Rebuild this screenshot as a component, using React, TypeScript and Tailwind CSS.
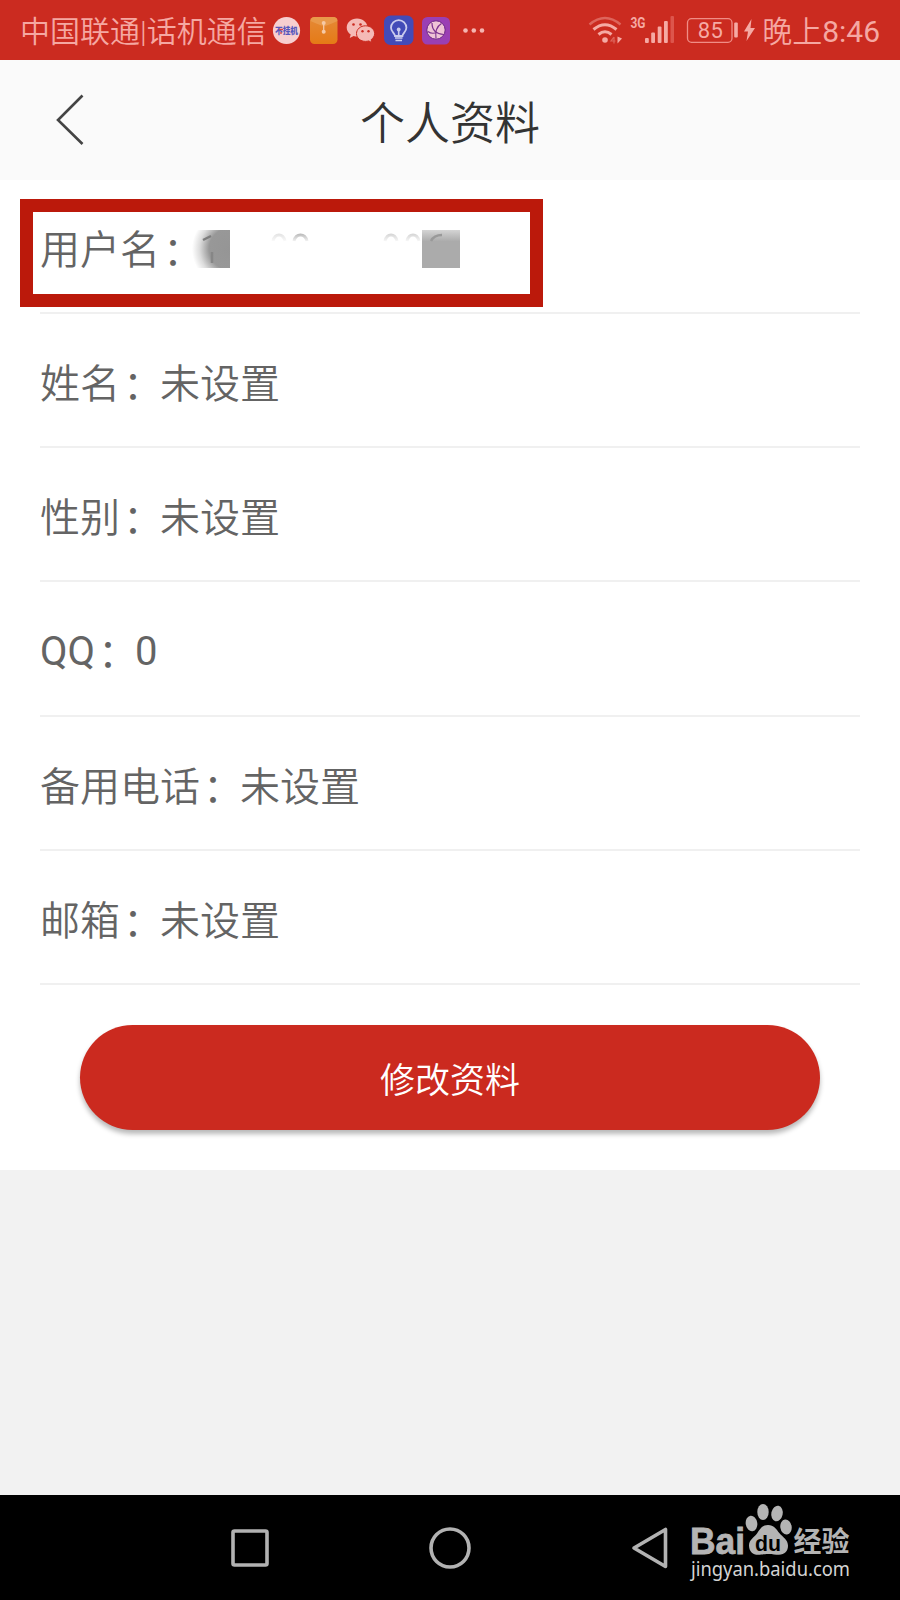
import React from 'react';

interface ProfileRowProps {
    label: string;
    value?: string;
    height: string;
    latin?: boolean;
    children?: React.ReactNode;
}

const CarrierIcons: React.FC = () => (
    <div className="flex items-center ml-[5px]">
        <svg width="30" height="60" viewBox="0 0 30 60">
            <circle cx="14.5" cy="30.5" r="13.6" fill="#f7cfd0" />
            <text x="3" y="34" fontSize="9" fontWeight="900" textLength="23" lengthAdjust="spacingAndGlyphs" fill="#5557bd" fontFamily="Noto Sans CJK SC">不挂机</text>
            <path d="M7 29.5h4M9 32v2" stroke="#d0474b" strokeWidth="1.3" />
        </svg>
        <svg className="ml-[6px]" width="30" height="60" viewBox="0 0 30 60">
            <defs>
                <linearGradient id="mail" x1="0" y1="0" x2="0" y2="1">
                    <stop offset="0" stopColor="#e58a37" />
                    <stop offset="1" stopColor="#e57a16" />
                </linearGradient>
            </defs>
            <rect x="2" y="17" width="27.5" height="27" rx="4.5" fill="url(#mail)" />
            <path d="M2.5 21q0-4 4.5-4h18q4.5 0 4.5 4q-11 5-13.5 5t-13.5-5z" fill="#e9994a" />
            <path d="M15.7 23.5v8" stroke="#f6c9a5" strokeWidth="1.3" />
            <circle cx="15.7" cy="23" r="2" fill="#f6c9a5" />
            <circle cx="15.7" cy="31.8" r="2" fill="#f6c9a5" />
        </svg>
        <svg className="ml-[6px]" width="34" height="60" viewBox="0 0 34 60">
            <path d="M13 18.5c-5.8 0-10.3 4-10.3 9 0 3 1.6 5.4 4 7l-1 3.6 4-2c1.2.4 2.2.5 3.6.5 5.7 0 10.2-4 10.2-9s-4.7-9.1-10.5-9.1z" fill="#f5bab6" />
            <path d="M21.5 25.8c-5 0-9 3.4-9 7.8s4 7.8 9 7.8c1.2 0 2.2-.2 3.2-.5l3.2 1.7-.8-2.9c2.1-1.4 3.5-3.6 3.5-6.1 0-4.4-4.1-7.8-9.1-7.8z" fill="#f5bab6" stroke="#cb2b20" strokeWidth="1" />
            <circle cx="9.5" cy="24.5" r="1.3" fill="#cb2b20" />
            <circle cx="16.5" cy="24.5" r="1.3" fill="#cb2b20" />
            <circle cx="18.5" cy="31.3" r="1.2" fill="#cb2b20" />
            <circle cx="24.5" cy="31.3" r="1.2" fill="#cb2b20" />
        </svg>
        <svg className="ml-[5px]" width="32" height="60" viewBox="0 0 32 60" fill="none">
            <rect x="1" y="15.5" width="29.5" height="29.5" rx="6.5" fill="#424bb8" />
            <path d="M12 36c0-2.5-4-4.200-4-8.200a7.700 7.700 0 0 1 15.400 0c0 4-4 5.700-4 8.200z" stroke="#c9cbed" strokeWidth="1.8" />
            <path d="M15.7 35.500V29.500M12 38h7.500M12.500 40.500h6.500" stroke="#c9cbed" strokeWidth="1.6" />
            <circle cx="15.7" cy="29.5" r="1.9" fill="#c9cbed" />
        </svg>
        <svg className="ml-[6px]" width="32" height="60" viewBox="0 0 32 60" fill="none">
            <rect x="1" y="17" width="28" height="27.5" rx="5.5" fill="#9a3fb4" />
            <circle cx="15" cy="30" r="9.2" fill="#efc3d6" stroke="#6c2785" strokeWidth="1" />
            <path d="M11 23c0 7 4 11 12 11.5M20.5 23.5c-5 3-6.5 8-5.5 15M7 31.5c3 2.5 6 2 9 1" stroke="#7d3290" strokeWidth="1.2" />
        </svg>
        <svg className="ml-[8px]" width="26" height="60" viewBox="0 0 26 60" fill="#f5b5b0">
            <circle cx="4.5" cy="30.5" r="2.3" />
            <circle cx="12.8" cy="30.5" r="2.3" />
            <circle cx="21" cy="30.5" r="2.3" />
        </svg>
    </div>
);

const SystemIcons: React.FC = () => (
    <div className="flex items-center">
        <svg width="40" height="60" viewBox="588 0 40 60" fill="none" stroke="#f5aaa4" strokeWidth="3">
            <path d="M589.5 24.5Q605 11.500 620.5 24.5" stroke="#dd655c" strokeWidth="2.4" />
            <path d="M593.5 29.5Q605 20 616.5 29.5" />
            <path d="M598.5 34.5Q605 29 611.5 34.5" />
            <circle cx="605" cy="40" r="2.8" fill="#f5aaa4" stroke="none" />
            <path d="M617.5 36.5v7l4.5-5z" fill="#f5aaa4" stroke="none" />
            <path d="M614 37v6.5M614 37l-3 4h4.5" stroke="#dd655c" strokeWidth="1.2" />
        </svg>
        <svg width="50" height="60" viewBox="628 0 50 60" fill="#f5aaa4">
            <text x="630.5" y="28" fontSize="15.5" fontWeight="700" textLength="15" lengthAdjust="spacingAndGlyphs" fontFamily="Roboto">3G</text>
            <rect x="645" y="38" width="3.8" height="5" rx="1" />
            <rect x="651.2" y="32.5" width="3.8" height="10.5" rx="1" />
            <rect x="657.7" y="26.5" width="3.8" height="16.5" rx="1" />
            <rect x="664" y="21" width="3.8" height="22" rx="1" />
            <rect x="670.5" y="16" width="3.5" height="27" rx="1" fill="#dd554c" />
        </svg>
        <svg className="ml-[7px]" width="74" height="60" viewBox="685 0 74 60">
            <rect x="687.5" y="18.7" width="44.5" height="23.6" rx="4" fill="none" stroke="#f08d86" strokeWidth="1.3" />
            <text x="697.8" y="37.8" fontSize="22" fontWeight="400" textLength="25" fill="#f5aaa4" fontFamily="Roboto">85</text>
            <rect x="734.2" y="22.5" width="3.6" height="15" rx="1" fill="#f5aaa4" />
            <path d="M751.5 19l-7.500 12.500h4l-1.500 9.500 8.500-13h-4.500z" fill="#f5aaa4" />
        </svg>
    </div>
);

const StatusBar: React.FC = () => (
    <div className="h-[60px] flex items-center justify-between bg-[#cb2b20] text-[#f5a8a2] text-[30px] leading-[60px] px-[20px]">
        <div className="flex items-center">
            <span className="whitespace-nowrap pt-[2px] h-[60px]">中国联通|话机通信</span>
            <CarrierIcons />
        </div>
        <div className="flex items-center">
            <SystemIcons />
            <span className="whitespace-nowrap ml-[3px] pt-[2px] h-[60px]">晚上</span>
            <span className="whitespace-nowrap font-normal pt-[2px] h-[60px]">8:46</span>
        </div>
    </div>
);

const ProfileRow: React.FC<ProfileRowProps> = ({ label, value, height, latin, children }) => (
    <div className={`${height} flex items-start mx-[40px] border-b-2 border-[#f0f0f0] text-[40px] leading-[60px] text-[#646464]`}>
        <span className={latin ? 'pt-[40px] font-normal' : 'pt-[41px]'}>{label}</span>
        <span className="pl-[3px] -mr-[3px] pt-[42px]">：</span>
        {value && <span className={latin ? 'pt-[40px] font-normal' : 'pt-[41px]'}>{value}</span>}
        {children}
    </div>
);

// What is left of the phone number after it has been smudged out
const MaskedNumber: React.FC = () => (
    <svg className="-ml-[10px] mt-[50px]" width="280" height="38" viewBox="190 230 280 38" fill="none">
        <defs>
            <radialGradient id="smudge" cx="1" cy="0.5" r="1">
                <stop offset="0" stopColor="#959595" />
                <stop offset="0.55" stopColor="#989898" />
                <stop offset="0.8" stopColor="#dcdcdc" />
                <stop offset="1" stopColor="#fff" />
            </radialGradient>
            <linearGradient id="block" x1="0" y1="0" x2="0" y2="1">
                <stop offset="0" stopColor="#d4d4d4" />
                <stop offset="0.3" stopColor="#ababab" />
                <stop offset="1" stopColor="#ababab" />
            </linearGradient>
            <linearGradient id="fade" gradientUnits="userSpaceOnUse" x1="0" y1="233" x2="0" y2="243">
                <stop offset="0" stopColor="#b4b4b4" />
                <stop offset="1" stopColor="#fff" />
            </linearGradient>
        </defs>
        <rect x="192" y="230" width="38" height="38" fill="url(#smudge)" />
        <path d="M203 240l8-4" stroke="#7d7d7d" strokeWidth="2.5" />
        <path d="M212 252v11" stroke="#868686" strokeWidth="2.5" />
        <g stroke="url(#fade)" strokeWidth="3">
            <path d="M273 241c2-8 10-8 12 0" opacity="0.4" />
            <path d="M294 241c2-8 11-8 13 0" />
            <path d="M385 241c2-8 10-8 12 0" opacity="0.6" />
            <path d="M407 241c2-8 10-8 12 0" opacity="0.6" />
        </g>
        <rect x="422" y="230" width="38" height="38" fill="url(#block)" />
        <path d="M431 241q3-6 11-6" stroke="#999" strokeWidth="2.5" />
    </svg>
);

const Watermark: React.FC = () => (
    <svg className="absolute left-[680px] top-0" width="180" height="105" viewBox="680 1495 180 105" fill="#b4b4b4">
        <text x="690" y="1554" fontSize="37" fontWeight="700" textLength="55" lengthAdjust="spacingAndGlyphs" stroke="#b4b4b4" strokeWidth="0.8" fontFamily="Liberation Sans">Bai</text>
        <ellipse cx="751.5" cy="1523.5" rx="5.8" ry="7.8" transform="rotate(-8 751.5 1523.5)" />
        <ellipse cx="763" cy="1512" rx="5.7" ry="8" />
        <ellipse cx="777" cy="1513.5" rx="5.7" ry="7.8" transform="rotate(12 777 1513.5)" />
        <ellipse cx="786" cy="1527" rx="5.7" ry="7.5" transform="rotate(-8 786 1527)" />
        <path d="M768 1525c-6 0-8 4-11 8.5-3 4-8 6.5-8 12 0 6 4 9.300 9 9.300 4 0 6-.8 10.500-.8s6.500.8 10.500.8c5.500 0 9-3.500 9-9 0-6-5-8.500-8.500-12.500-3.500-4.500-5.500-8.300-11.500-8.300z" />
        <text x="755" y="1550.5" fontSize="22" fontWeight="700" textLength="26" lengthAdjust="spacingAndGlyphs" fill="#000" fontFamily="Liberation Sans">du</text>
        <text x="793.5" y="1552" fontSize="28" fontWeight="700" textLength="56" lengthAdjust="spacingAndGlyphs" fontFamily="Noto Sans CJK SC">经验</text>
        <text x="691" y="1575.5" fontSize="20" fontWeight="400" textLength="159" lengthAdjust="spacingAndGlyphs" fill="#d4d4d4" fontFamily="Noto Sans">jingyan.baidu.com</text>
    </svg>
);

const NavigationBar: React.FC = () => (
    <div className="relative h-[105px] flex items-center px-[150px] bg-black">
        <div className="w-[200px] flex justify-center">
            <svg width="44" height="44" viewBox="0 0 44 44" fill="none" stroke="#b2b2b2" strokeWidth="3.6">
                <rect x="5" y="5" width="34" height="34" rx="1.5" />
            </svg>
        </div>
        <div className="w-[200px] flex justify-center">
            <svg width="44" height="44" viewBox="0 0 44 44" fill="none" stroke="#b2b2b2" strokeWidth="3.6">
                <circle cx="22" cy="22" r="19" />
            </svg>
        </div>
        <div className="w-[200px] flex justify-center">
            <svg width="44" height="44" viewBox="0 0 44 44" fill="none" stroke="#b2b2b2" strokeWidth="3.6" strokeLinejoin="round">
                <path d="M37.5 3.5v37L6 22z" />
            </svg>
        </div>
        <Watermark />
    </div>
);

export default function App() {
    return (
        <div className="w-[900px] h-[1600px] flex flex-col overflow-hidden bg-[#f2f2f2] font-['Roboto','Noto_Sans_CJK_SC',sans-serif] font-[350]">
            <StatusBar />
            <header className="h-[120px] flex items-center bg-[#fafafa] px-[50px]">
                <svg width="40" height="56" viewBox="50 92 40 56" fill="none" stroke="#444" strokeWidth="2.6">
                    <path d="M82.5 95.5L58 120l24.5 24" />
                </svg>
                <h1 className="flex-1 text-center text-[45px] leading-[60px] pt-[9px] pr-[40px] font-[350] text-[#333]">个人资料</h1>
            </header>
            <main className="h-[990px] bg-white">
                <div className="relative">
                    <ProfileRow label="用户名" height="h-[134px]">
                        <MaskedNumber />
                    </ProfileRow>
                    <div className="absolute left-[20px] top-[19px] w-[523px] h-[108px] border-[13px] border-[#bb190b]" />
                </div>
                <ProfileRow label="姓名" value="未设置" height="h-[134px]" />
                <ProfileRow label="性别" value="未设置" height="h-[134px]" />
                <ProfileRow label="QQ" value="0" height="h-[135px]" latin />
                <ProfileRow label="备用电话" value="未设置" height="h-[134px]" />
                <ProfileRow label="邮箱" value="未设置" height="h-[134px]" />
                <button className="block w-[740px] h-[105px] mt-[40px] mx-[80px] pt-[9px] rounded-full bg-[#cb2a1f] text-white text-[35px] font-[350] shadow-[0_4px_5px_rgba(0,0,0,0.28)]">
                    修改资料
                </button>
            </main>
            <div className="flex-1" />
            <NavigationBar />
        </div>
    );
}
